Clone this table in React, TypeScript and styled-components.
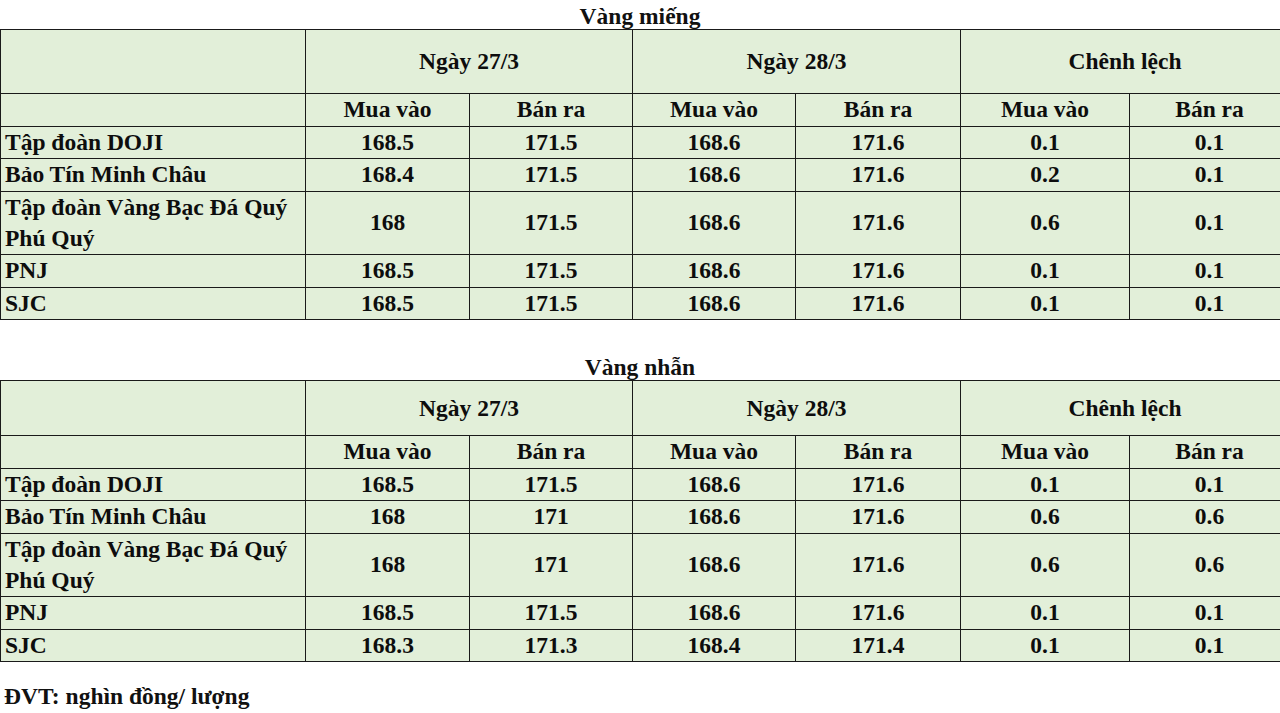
import React from 'react';
import styled, { createGlobalStyle } from 'styled-components';

const GlobalStyle = createGlobalStyle`
  html, body {
    margin: 0;
    padding: 0;
    background: #ffffff;
    overflow: hidden;
  }
  body {
    font-family: "Liberation Serif", "Times New Roman", serif;
    color: #111;
  }
`;

interface Row {
  name: string;
  values: string[];
}

const miengRows: Row[] = [
  { name: 'Tập đoàn DOJI', values: ['168.5', '171.5', '168.6', '171.6', '0.1', '0.1'] },
  { name: 'Bảo Tín Minh Châu', values: ['168.4', '171.5', '168.6', '171.6', '0.2', '0.1'] },
  { name: 'Tập đoàn Vàng Bạc Đá Quý Phú Quý', values: ['168', '171.5', '168.6', '171.6', '0.6', '0.1'] },
  { name: 'PNJ', values: ['168.5', '171.5', '168.6', '171.6', '0.1', '0.1'] },
  { name: 'SJC', values: ['168.5', '171.5', '168.6', '171.6', '0.1', '0.1'] },
];

const nhanRows: Row[] = [
  { name: 'Tập đoàn DOJI', values: ['168.5', '171.5', '168.6', '171.6', '0.1', '0.1'] },
  { name: 'Bảo Tín Minh Châu', values: ['168', '171', '168.6', '171.6', '0.6', '0.6'] },
  { name: 'Tập đoàn Vàng Bạc Đá Quý Phú Quý', values: ['168', '171', '168.6', '171.6', '0.6', '0.6'] },
  { name: 'PNJ', values: ['168.5', '171.5', '168.6', '171.6', '0.1', '0.1'] },
  { name: 'SJC', values: ['168.3', '171.3', '168.4', '171.4', '0.1', '0.1'] },
];

const colWidths = [305, 164, 163, 163, 165, 169, 160];
const groups = ['Ngày 27/3', 'Ngày 28/3', 'Chênh lệch'];

function GoldTable(props: { title: string; rows: Row[]; headHeight: number; gap: number }) {
  return (
    <>
      <Title $gap={props.gap}>{props.title}</Title>
      <PriceTable>
        <colgroup>
          {colWidths.map((w, i) => (
            <col key={i} style={{ width: w }} />
          ))}
        </colgroup>
        <tbody>
          <HeadRow $height={props.headHeight}>
            <Cell />
            {groups.map((g) => (
              <Cell key={g} colSpan={2} $center>
                {g}
              </Cell>
            ))}
          </HeadRow>
          <tr>
            <Cell />
            {groups.map((g) => (
              <React.Fragment key={g}>
                <Cell $center>Mua vào</Cell>
                <Cell $center>Bán ra</Cell>
              </React.Fragment>
            ))}
          </tr>
          {props.rows.map((r) => (
            <tr key={r.name}>
              <Cell>{r.name}</Cell>
              {r.values.map((v, i) => (
                <Cell key={i} $center>
                  {v}
                </Cell>
              ))}
            </tr>
          ))}
        </tbody>
      </PriceTable>
    </>
  );
}

export default function App() {
  return (
    <>
      <GlobalStyle />
      <Page>
        <GoldTable title="Vàng miếng" rows={miengRows} headHeight={64} gap={3} />
        <GoldTable title="Vàng nhẫn" rows={nhanRows} headHeight={55} gap={34} />
        <Footer>ĐVT: nghìn đồng/ lượng</Footer>
      </Page>
    </>
  );
}

const Page = styled.div`
  width: 1289px;
`;

const Title = styled.div<{ $gap: number }>`
  margin-top: ${(p) => p.$gap}px;
  width: 1280px;
  text-align: center;
  font-size: 23.5px;
  font-weight: bold;
  line-height: 26px;
`;

const PriceTable = styled.table`
  table-layout: fixed;
  width: 1289px;
  border-collapse: collapse;
  background: #e2efd9;
  border: 1.5px solid #333;
`;

const HeadRow = styled.tr<{ $height: number }>`
  height: ${(p) => p.$height}px;
`;

const Cell = styled.td<{ $center?: boolean }>`
  border: 1px solid #1a1a1a;
  padding: 0.25px 4px;
  font-size: 23.5px;
  font-weight: bold;
  line-height: 31px;
  text-align: ${(p) => (p.$center ? 'center' : 'left')};
  vertical-align: middle;
  color: #0d0d0d;
`;

const Footer = styled.div`
  margin-top: 21px;
  padding-left: 4px;
  font-size: 23.5px;
  font-weight: bold;
  line-height: 26px;
`;
